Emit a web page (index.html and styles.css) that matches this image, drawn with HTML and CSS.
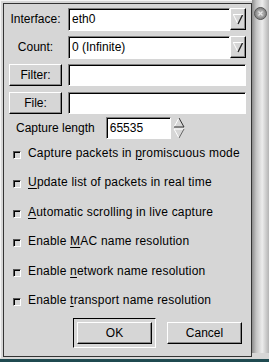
FILE: index.html
```html
<!DOCTYPE html>
<html lang="en">
<head>
  <meta charset="UTF-8" />
  <title>Ethereal: Capture Preferences</title>
  <link rel="stylesheet" href="styles.css">
</head>
<body>

<div class="screen">
  <div class="dialog">
    <div class="inner">

      <div class="fields">
        <span class="label">Interface:</span>
        <div class="combo">
          <div class="entry">eth0</div>
          <span class="drop">
            <svg width="12" height="14" viewBox="0 0 12 14"><path d="M1 2.5H11" stroke="#fff"/><path d="M1.5 3L6 12" stroke="#fff"/><path d="M10.5 3L6 12" stroke="#222" stroke-width="1.4"/></svg>
          </span>
        </div>

        <span class="label">Count:</span>
        <div class="combo">
          <div class="entry">0 (Infinite)</div>
          <span class="drop">
            <svg width="12" height="14" viewBox="0 0 12 14"><path d="M1 2.5H11" stroke="#fff"/><path d="M1.5 3L6 12" stroke="#fff"/><path d="M10.5 3L6 12" stroke="#222" stroke-width="1.4"/></svg>
          </span>
        </div>

        <button class="btn">Filter:</button>
        <div class="entry"></div>

        <button class="btn">File:</button>
        <div class="entry"></div>
      </div>

      <div class="caplen">
        <span>Capture length</span>
        <div class="entry spin">65535</div>
        <svg class="arrows" width="12" height="22" viewBox="0 0 12 22">
          <path d="M1 10L6 1" stroke="#fff"/><path d="M6 1L11 10H1" stroke="#333" fill="none"/>
          <path d="M1 12H11" stroke="#fff"/><path d="M1 12L6 21" stroke="#fff"/><path d="M11 12L6 21" stroke="#666"/>
        </svg>
      </div>

      <div class="checks">
        <label class="check"><span class="box"></span><span>Capture packets in <u>p</u>romiscuous mode</span></label>
        <label class="check"><span class="box"></span><span><u>U</u>pdate list of packets in real time</span></label>
        <label class="check"><span class="box"></span><span><u>A</u>utomatic scrolling in live capture</span></label>
        <label class="check"><span class="box"></span><span>Enable <u>M</u>AC name resolution</span></label>
        <label class="check"><span class="box"></span><span>Enable <u>n</u>etwork name resolution</span></label>
        <label class="check"><span class="box"></span><span>Enable <u>t</u>ransport name resolution</span></label>
      </div>

      <div class="actions">
        <div class="default"><button class="btn wide">OK</button></div>
        <button class="btn wide">Cancel</button>
      </div>

    </div>
  </div>

  <div class="side">
    <svg class="close" width="13" height="13" viewBox="0 0 13 13">
      <circle cx="6.5" cy="6.5" r="6" fill="#8a8a8a" stroke="#555"/>
      <circle cx="6.5" cy="6.5" r="4" fill="#a8a8a8"/>
      <path d="M4.5 4.5L8.5 8.5M8.5 4.5L4.5 8.5" stroke="#e8e8e8" stroke-width="1.3"/>
    </svg>
  </div>
</div>
<div class="taskbar"></div>

</body>
</html>
```

FILE: styles.css
```css
body {
  margin: 0;
  font-family: 'Liberation Sans', Arial, sans-serif;
  font-size: 12px;
  color: #000;
  background: #d6d6d6;
  width: 269px;
  height: 362px;
  overflow: hidden;
}
.screen {
  display: flex;
  height: 359px;
}
.dialog {
  width: 252px;
  height: 358px;
  box-sizing: border-box;
  background: #d6d6d6;
  border-top: 1px solid #f4f4f4;
  border-left: 1px solid #f4f4f4;
  padding: 2px 0 1px 2px;
}
.inner {
  height: 100%;
  box-sizing: border-box;
  border: 1px solid #333;
  padding: 4px 3px 0 5px;
}
.fields {
  display: grid;
  grid-template-columns: 53px 178px;
  grid-auto-rows: 22px;
  column-gap: 6px;
  row-gap: 6px;
  align-items: center;
}
.label {
  text-align: center;
}
.entry {
  height: 22px;
  box-sizing: border-box;
  background: #fff;
  border: 1px solid;
  border-color: #808080 #fff #fff #808080;
  box-shadow: inset 1px 1px 0 #000;
  padding: 3px 0 0 3px;
  line-height: 15px;
  white-space: nowrap;
}
.combo {
  display: flex;
  align-items: center;
}
.combo .entry {
  flex: 1;
  height: 23px;
}
.drop {
  width: 16px;
  height: 22px;
  box-sizing: border-box;
  display: flex;
  align-items: center;
  justify-content: center;
  background: #d6d6d6;
  border-top: 1px solid #fff;
  border-left: 1px solid #fff;
  border-right: 1px solid #000;
  border-bottom: 1px solid #000;
  box-shadow: inset -1px -1px 0 #888;
}
.btn {
  font: inherit;
  color: #000;
  height: 22px;
  padding: 0;
  background: #d6d6d6;
  border-style: solid;
  border-width: 1px;
  border-color: #fff #000 #000 #fff;
  box-shadow: inset -1px -1px 0 #888;
  cursor: pointer;
}
.caplen {
  display: flex;
  align-items: center;
  margin-top: 3px;
  height: 22px;
  padding-left: 7px;
}
.caplen .spin {
  width: 65px;
  margin-left: 11px;
}
.arrows {
  margin-left: 2px;
}
.checks {
  display: flex;
  flex-direction: column;
  margin-top: -1px;
  letter-spacing: 0.2px;
}
.check {
  display: flex;
  align-items: center;
  height: 29.5px;
  padding-left: 4px;
  white-space: nowrap;
}
.box {
  width: 8px;
  height: 8px;
  box-sizing: border-box;
  margin: 4px 7px 0 0;
  background: #d6d6d6;
  border: 1px solid;
  border-color: #555 #fff #fff #555;
  box-shadow: inset 1px 1px 0 #000;
}
u {
  text-decoration-thickness: 1px;
  text-underline-offset: 2px;
}
.actions {
  display: flex;
  align-items: center;
  margin-top: 3px;
  padding-left: 64px;
  gap: 11px;
}
.default {
  border: 1px solid;
  border-color: #000 #fff #fff #000;
  padding: 3px;
}
.wide {
  width: 75px;
}
.side {
  width: 17px;
  height: 353px;
  background: linear-gradient(to right, #8c8c8c, #c4c4c4 25%, #ececec 60%, #b4b4b4);
  display: flex;
  justify-content: center;
  padding-top: 7px;
  box-sizing: border-box;
}
.taskbar {
  height: 3px;
  background: #1f4a50;
}
```
